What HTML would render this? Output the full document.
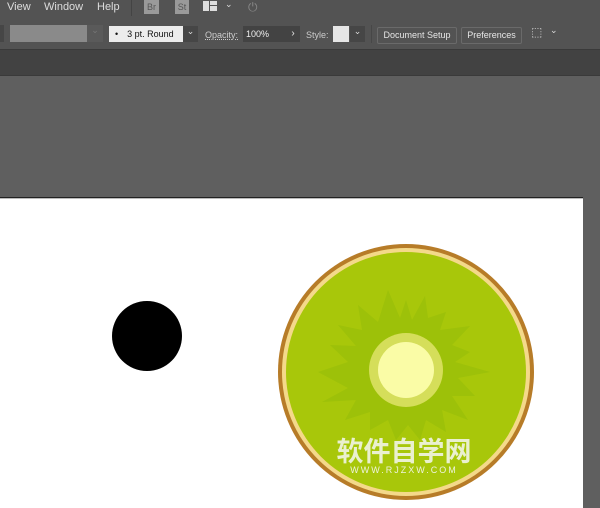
<!DOCTYPE html><html><head><meta charset="utf-8"><style>
body{margin:0;width:600px;height:508px;overflow:hidden;background:#5f5f5f;font-family:"Liberation Sans",sans-serif;position:relative}
.a{position:absolute}
.menu{top:0;left:0;width:600px;height:18px;background:#535353;color:#ddd;font-size:11px}
.tb{top:18px;left:0;width:600px;height:31px;background:#535353}
.strip{top:49px;left:0;width:600px;height:25px;background:#424242;border-top:1px solid #3a3a3a;border-bottom:1px solid #3a3a3a}
.btn{border:1px solid #6a6a6a;border-radius:2px;color:#e6e6e6;font-size:9px;text-align:center;line-height:15px;height:15px}
.lbl{color:#ccc;font-size:9px}
</style></head><body>
<div class="a menu">
<span class="a" style="left:7px;top:1px">View</span>
<span class="a" style="left:44px;top:1px">Window</span>
<span class="a" style="left:97px;top:1px">Help</span>
<div class="a" style="left:131px;top:0;width:1px;height:16px;background:#444"></div>
<div class="a" style="left:144px;top:0;width:15px;height:14px;background:#9a9a9a;color:#555;font-size:9px;line-height:14px;text-align:center">Br</div>
<div class="a" style="left:175px;top:0;width:14px;height:14px;background:#9a9a9a;color:#555;font-size:9px;line-height:14px;text-align:center">St</div>
<div class="a" style="left:203px;top:1px;width:6px;height:10px;background:#ddd"></div>
<div class="a" style="left:210px;top:1px;width:7px;height:4px;background:#ddd"></div>
<div class="a" style="left:210px;top:6px;width:7px;height:5px;background:#ddd"></div>
<span class="a" style="left:225px;top:-1px;font-size:9px">⌄</span>
<span class="a" style="left:248px;top:0;color:#888;font-size:12px">⏻</span>
</div>
<div class="a tb">
<div class="a" style="left:0;top:7px;width:4px;height:17px;background:#464646"></div>
<div class="a" style="left:10px;top:7px;width:77px;height:17px;background:#8a8a8a"></div>
<div class="a" style="left:87px;top:7px;width:16px;height:17px;background:#5a5a5a;color:#777;font-size:9px;text-align:center">⌄</div>
<div class="a" style="left:109px;top:8px;width:74px;height:16px;background:#ececec;color:#111;font-size:9px;line-height:16px"><span style="margin-left:6px">•</span><span style="margin-left:9px">3 pt. Round</span></div>
<div class="a" style="left:183px;top:8px;width:15px;height:16px;background:#464646;color:#ddd;font-size:9px;text-align:center">⌄</div>
<span class="a lbl" style="left:205px;top:12px;text-decoration:underline dotted">Opacity:</span>
<div class="a" style="left:243px;top:8px;width:42px;height:16px;background:#434343;color:#eee;font-size:9px;line-height:16px;padding-left:3px">100%</div>
<div class="a" style="left:286px;top:8px;width:14px;height:16px;background:#434343;color:#eee;font-size:10px;line-height:16px;text-align:center">›</div>
<span class="a lbl" style="left:306px;top:12px">Style:</span>
<div class="a" style="left:333px;top:8px;width:16px;height:16px;background:#e6e6e6"></div>
<div class="a" style="left:350px;top:8px;width:15px;height:16px;background:#464646;color:#ddd;font-size:9px;text-align:center">⌄</div>
<div class="a" style="left:371px;top:7px;width:1px;height:18px;background:#474747"></div>
<div class="a btn" style="left:377px;top:9px;width:78px">Document Setup</div>
<div class="a btn" style="left:461px;top:9px;width:59px">Preferences</div>
<span class="a" style="left:531px;top:7px;color:#ccc;font-size:12px">⬚</span>
<span class="a" style="left:550px;top:7px;color:#ddd;font-size:9px">⌄</span>
</div>
<div class="a strip"></div>
<div class="a" style="left:0;top:197px;width:583px;height:1px;background:#222"></div>
<div class="a" style="left:0;top:198px;width:583px;height:310px;background:#fff;border-top:1px solid #bbb;box-sizing:border-box"></div>
<div class="a" style="left:112px;top:301px;width:70px;height:70px;border-radius:50%;background:#000"></div>
<svg class="a" style="left:0;top:0" width="600" height="508">
<circle cx="406" cy="372" r="128" fill="#b77c28"/>
<circle cx="406" cy="372" r="124" fill="#f4d98a"/>
<circle cx="406" cy="372" r="120" fill="#a8c70a"/>
<g fill="#9dc109">
<polygon points="388,290 400,318 406,300 412,320 425,296 428,318 446,312 440,330 470,326 452,345 470,352 455,362 490,372 458,378 475,396 452,396 468,420 442,410 446,432 426,420 420,440 408,425 396,440 388,420 370,430 370,412 345,420 356,400 322,402 348,388 318,372 348,362 330,345 356,346 338,325 362,330 358,305 378,322"/>
</g>
<circle cx="406" cy="370" r="37" fill="#d5de5a"/>
<circle cx="406" cy="370" r="28" fill="#fafca6"/>
<text x="404" y="461" text-anchor="middle" font-family="Noto Sans CJK SC,sans-serif" font-size="27" font-weight="bold" fill="#f0f4e0" opacity="0.92">软件自学网</text>
<text x="404" y="473" text-anchor="middle" font-family="Liberation Sans,sans-serif" font-size="9" fill="#eef3dc" letter-spacing="2">WWW.RJZXW.COM</text>
</svg>
</body></html>
